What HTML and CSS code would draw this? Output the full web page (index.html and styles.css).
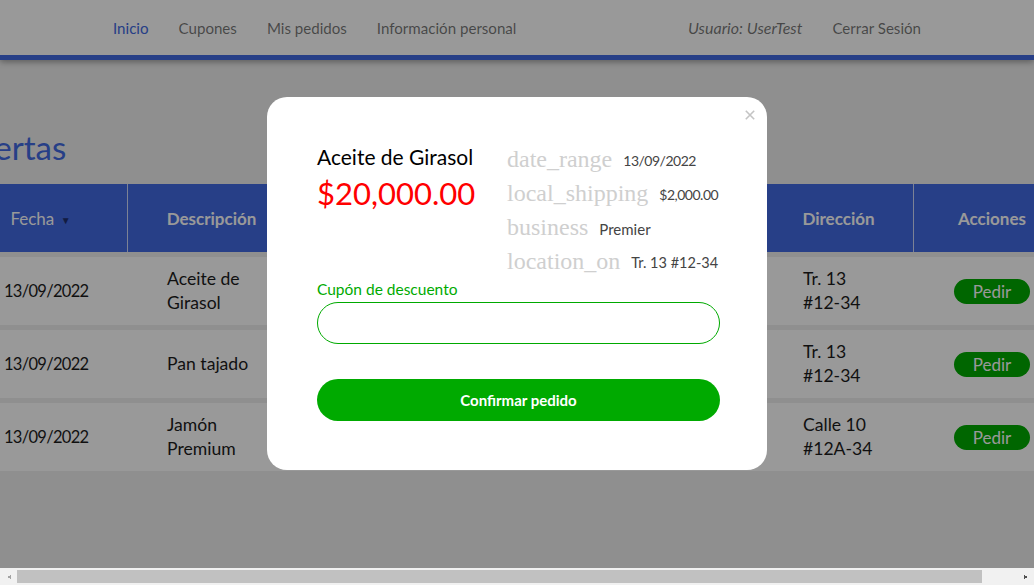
FILE: index.html
```html
<!DOCTYPE html>
<html lang="es">
<head>
<meta charset="utf-8">
<title>Ofertas</title>
<link rel="stylesheet" href="styles.css">
</head>
<body>
<div class="viewport">
  <nav class="navbar">
    <div class="nav-inner">
      <ul class="nav-links">
        <li><a class="nav-link active">Inicio</a></li>
        <li><a class="nav-link">Cupones</a></li>
        <li><a class="nav-link">Mis pedidos</a></li>
        <li><a class="nav-link">Información personal</a></li>
      </ul>
      <ul class="nav-links">
        <li><span class="nav-user">Usuario: UserTest</span></li>
        <li><a class="nav-link">Cerrar Sesión</a></li>
      </ul>
    </div>
  </nav>
  <main class="content">
    <section class="offers">
      <h1 class="title">Ofertas</h1>
      <table class="offers-table">
        <colgroup>
          <col class="c-date"><col class="c-desc"><col class="c-mid"><col class="c-mid"><col class="c-mid"><col class="c-addr"><col class="c-act">
        </colgroup>
        <thead>
          <tr>
            <th class="th-sort">Fecha <span class="sort-arrow">&#9660;</span></th>
            <th>Descripción</th>
            <th></th>
            <th></th>
            <th></th>
            <th>Dirección</th>
            <th>Acciones</th>
          </tr>
        </thead>
        <tbody>
          <tr>
            <td class="num">13/09/2022</td>
            <td>Aceite de Girasol</td>
            <td></td>
            <td></td>
            <td></td>
            <td>Tr. 13 #12-34</td>
            <td><button class="btn-pedir">Pedir</button></td>
          </tr>
          <tr>
            <td class="num">13/09/2022</td>
            <td>Pan tajado</td>
            <td></td>
            <td></td>
            <td></td>
            <td>Tr. 13 #12-34</td>
            <td><button class="btn-pedir">Pedir</button></td>
          </tr>
          <tr>
            <td class="num">13/09/2022</td>
            <td>Jamón Premium</td>
            <td></td>
            <td></td>
            <td></td>
            <td>Calle 10 #12A-34</td>
            <td><button class="btn-pedir">Pedir</button></td>
          </tr>
        </tbody>
      </table>
    </section>
  </main>
</div>
<div class="hscroll">
  <span class="hs-btn hs-left"></span>
  <div class="hs-track"><div class="hs-thumb"></div></div>
  <span class="hs-btn hs-right"></span>
</div>

<div class="overlay">
  <div class="modal">
    <button class="modal-close" aria-label="Cerrar">
      <svg width="10" height="10" viewBox="0 0 10 10"><path d="M0.8 0.8 L9.2 9.2 M9.2 0.8 L0.8 9.2" stroke="#c4c4c4" stroke-width="1.6" fill="none"/></svg>
    </button>
    <div class="modal-top">
      <div class="product">
        <div class="product-name">Aceite de Girasol</div>
        <div class="product-price">$20,000.00</div>
      </div>
      <ul class="details">
        <li><span class="icon">date_range</span><span class="value num">13/09/2022</span></li>
        <li><span class="icon">local_shipping</span><span class="value num">$2,000.00</span></li>
        <li><span class="icon">business</span><span class="value">Premier</span></li>
        <li><span class="icon">location_on</span><span class="value addr">Tr. 13 #12-34</span></li>
      </ul>
    </div>
    <label class="coupon-label" for="coupon">Cupón de descuento</label>
    <input class="coupon-input" id="coupon" type="text">
    <button class="btn-confirm">Confirmar pedido</button>
  </div>
</div>
</body>
</html>
```

FILE: styles.css
```css
* { box-sizing: border-box; }

html, body {
  margin: 0;
  height: 100%;
}

body {
  font-family: Lato, "Liberation Sans", sans-serif;
  background: #eeeeee;
  color: #222;
  display: flex;
  flex-direction: column;
  overflow: hidden;
}

.viewport {
  flex: 1;
  overflow: hidden;
  min-height: 0;
}

/* ---------- Navbar ---------- */
.navbar {
  height: 60px;
  background: #fff;
  border-bottom: 5px solid #4169e1;
  box-shadow: 0 2px 6px rgba(0, 0, 0, 0.35);
  position: relative;
  z-index: 1;
}

.nav-inner {
  width: 808px;
  height: 55px;
  margin: 0 auto;
  display: flex;
  align-items: center;
  justify-content: space-between;
}

.nav-links {
  list-style: none;
  margin: 0;
  padding: 0;
  display: flex;
  gap: 30px;
}

.nav-link {
  font-size: 15.1px;
  color: rgba(0, 0, 0, 0.55);
  text-decoration: none;
}

.nav-user {
  font-size: 16px;
  font-style: italic;
  color: rgba(0, 0, 0, 0.55);
}

.nav-link.active { color: #4169e1; }

/* ---------- Content ---------- */
.content {
  display: flex;
  justify-content: center;
}

.offers {
  flex: 0 0 1120px;
  padding-top: 67px;
}

.title {
  margin: 0 0 12px 0;
  font-size: 33px;
  font-weight: 400;
  line-height: 40px;
  color: #4169e1;
}

.offers-table {
  width: 1106px;
  margin: 0 auto;
  table-layout: fixed;
  border-collapse: separate;
  border-spacing: 0 5px;
  font-size: 17.6px;
}

.c-date { width: 163px; }
.c-desc { width: 168px; }
.c-mid { width: 156px; }
.c-addr { width: 150px; }
.c-act { width: 157px; }

.offers-table th {
  height: 68px;
  padding: 0 20px;
  background: #4169e1;
  color: #fff;
  font-size: 17px;
  font-weight: 700;
  text-align: center;
  border-left: 1px solid rgba(255, 255, 255, 0.75);
}

.offers-table th:first-child { border-left: none; }

.offers-table th.th-sort {
  font-weight: 400;
  padding-right: 30px;
}

.sort-arrow {
  font-size: 10px;
  color: #1f2f6e;
  vertical-align: 1px;
  margin-left: 2px;
}

.offers-table td {
  background: #fff;
  padding: 10px 40px;
  line-height: 24px;
  vertical-align: middle;
  color: #1c1c1c;
}

.offers-table td.num {
  white-space: nowrap;
  font-size: 16.5px;
  letter-spacing: -0.7px;
}

.btn-pedir {
  font-family: inherit;
  font-size: 17px;
  line-height: 25px;
  height: 25px;
  width: 76px;
  padding: 0;
  border: none;
  border-radius: 13px;
  background: #00aa00;
  color: #fff;
  display: block;
  margin-left: 1px;
}

/* ---------- Fake horizontal scrollbar ---------- */
.hscroll {
  flex: 0 0 17px;
  height: 17px;
  background: #f1f1f1;
  display: flex;
  align-items: center;
}

.hs-btn {
  flex: 0 0 17px;
  height: 17px;
  background-repeat: no-repeat;
  background-position: center;
  background-size: 4px 8px;
}

.hs-left {
  background-image: conic-gradient(from 60deg at 0 50%, #a3a3a3 60deg, transparent 0);
}

.hs-right {
  background-image: conic-gradient(from 240deg at 100% 50%, #505050 60deg, transparent 0);
}

.hs-track {
  flex: 1;
  height: 17px;
  padding: 2px 0;
}

.hs-thumb {
  width: 965px;
  height: 13px;
  background: #c1c1c1;
}

/* ---------- Modal ---------- */
.overlay {
  position: fixed;
  top: 0;
  left: 0;
  right: 0;
  bottom: 17px;
  background: rgba(0, 0, 0, 0.4);
  display: flex;
  align-items: center;
  justify-content: center;
  z-index: 10;
}

.modal {
  position: relative;
  width: 500px;
  height: 373px;
  margin-bottom: 1px;
  background: #fff;
  border-radius: 20px;
  padding: 45px 47px 49px 50px;
  display: flex;
  flex-direction: column;
}

.modal-close {
  position: absolute;
  top: 13px;
  right: 12px;
  width: 10px;
  height: 10px;
  padding: 0;
  border: none;
  background: none;
  display: flex;
}

.modal-top {
  display: grid;
  grid-template-columns: 190px 1fr;
  height: 136px;
}

.product-name {
  font-size: 21px;
  line-height: 29px;
  color: #000;
}

.product-price {
  font-size: 31px;
  line-height: 44px;
  color: #ff0000;
}

.details {
  list-style: none;
  margin: 0;
  padding: 0;
}

.details li {
  height: 34px;
  display: flex;
  align-items: center;
  gap: 11px;
}

.icon {
  font-family: "Liberation Serif", serif;
  font-size: 24px;
  line-height: 34px;
  color: #cfcfcf;
}

.value {
  font-size: 15px;
  padding-top: 3px;
  color: #444;
}

.value.num {
  font-size: 14px;
  letter-spacing: -0.5px;
}

.value.addr { font-size: 14.5px; }

.coupon-label {
  font-size: 15.5px;
  line-height: 22px;
  color: #00aa00;
}

.coupon-input {
  margin-top: 2px;
  height: 42px;
  width: 403px;
  border: 1px solid #00aa00;
  border-radius: 21px;
  outline: none;
  padding: 0 18px;
  font-family: inherit;
  font-size: 16px;
}

.btn-confirm {
  margin-top: 35px;
  height: 42px;
  width: 403px;
  border: none;
  border-radius: 21px;
  background: #00aa00;
  color: #fff;
  font-family: inherit;
  font-size: 15px;
  font-weight: 700;
}
```
